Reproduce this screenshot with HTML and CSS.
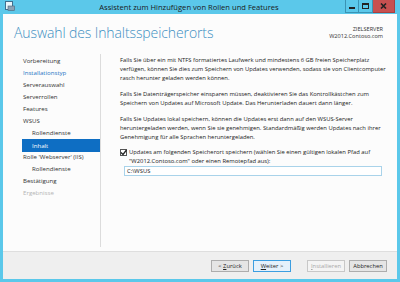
FILE: index.html
```html
<!DOCTYPE html>
<html lang="de">
<head>
<meta charset="utf-8">
<title>Assistent zum Hinzufügen von Rollen und Features</title>
<link rel="stylesheet" href="styles.css">
</head>
<body>
<div class="window">
  <div class="titlebar">
    <svg class="appicon" width="10" height="10" viewBox="0 0 10 10">
      <rect x="0.5" y="0.5" width="7" height="8" fill="#eaf6fb" stroke="#3f6f8f"/>
      <rect x="3" y="5" width="6.5" height="4.5" fill="#8aa2b5" stroke="#4d6478" stroke-width="0.6"/>
    </svg>
    <div class="title">Assistent zum Hinzufügen von Rollen und Features</div>
    <div class="controls">
      <div class="ctl"><span class="min"></span></div>
      <div class="ctl"><span class="max"></span></div>
      <div class="ctl close">
        <svg width="7" height="6" viewBox="0 0 7 6"><path d="M1 0.5 L6 5.5 M6 0.5 L1 5.5" stroke="#222" stroke-width="1.6"/></svg>
      </div>
    </div>
  </div>
  <div class="client">
    <div class="header">
      <h1>Auswahl des Inhaltsspeicherorts</h1>
      <div class="target">
        <div>ZIELSERVER</div>
        <div>W2012.Contoso.com</div>
      </div>
    </div>
    <div class="main">
      <ul class="nav">
        <li>Vorbereitung</li>
        <li class="link">Installationstyp</li>
        <li>Serverauswahl</li>
        <li>Serverrollen</li>
        <li>Features</li>
        <li>WSUS</li>
        <li class="sub">Rollendienste</li>
        <li class="sub active">Inhalt</li>
        <li>Rolle 'Webserver' (IIS)</li>
        <li class="sub">Rollendienste</li>
        <li>Bestätigung</li>
        <li class="disabled">Ergebnisse</li>
      </ul>
      <div class="divider"></div>
      <div class="content">
        <p>Falls Sie über ein mit NTFS formatiertes Laufwerk und mindestens 6 GB freien Speicherplatz verfügen, können Sie dies zum Speichern von Updates verwenden, sodass sie von Clientcomputer rasch herunter geladen werden können.</p>
        <p>Falls Sie Datenträgerspeicher einsparen müssen, deaktivieren Sie das Kontrollkästchen zum Speichern von Updates auf Microsoft Update. Das Herunterladen dauert dann länger.</p>
        <p>Falls Sie Updates lokal speichern, können die Updates erst dann auf den WSUS-Server heruntergeladen werden, wenn Sie sie genehmigen. Standardmäßig werden Updates nach ihrer Genehmigung für alle Sprachen heruntergeladen.</p>
        <div class="check">
          <span class="box"><svg width="7" height="7" viewBox="0 0 7 7"><path d="M1 3.5 L3 5.5 L6.5 1" fill="none" stroke="#222" stroke-width="1.3"/></svg></span>
          <span class="label">Updates am folgenden Speicherort speichern (wählen Sie einen gültigen lokalen Pfad auf "W2012.Contoso.com" oder einen Remotepfad aus):</span>
        </div>
        <div class="path">C:\WSUS</div>
      </div>
    </div>
    <div class="footer">
      <div class="btngroup">
        <div class="btn">&lt; <u>Z</u>urück</div>
        <div class="btn default"><u>W</u>eiter &gt;</div>
      </div>
      <div class="btngroup">
        <div class="btn disabled"><u>I</u>nstallieren</div>
        <div class="btn">Abbrechen</div>
      </div>
    </div>
  </div>
</div>
</body>
</html>
```

FILE: styles.css
```css
* { box-sizing: border-box; }
html, body { margin: 0; padding: 0; }
body {
  width: 400px;
  height: 282px;
  overflow: hidden;
  background: #5bc8ea;
  font-family: "Open Sans", "DejaVu Sans", sans-serif;
  color: #222;
}
.window {
  width: 400px;
  height: 282px;
  display: flex;
  flex-direction: column;
  padding: 0 3px 3px 3px;
  background: #5bc8ea;
}
.titlebar {
  height: 14px;
  display: flex;
  align-items: center;
}
.appicon { margin-left: 2px; margin-top: -2px; }
.title {
  flex: 1;
  text-align: center;
  font-size: 7.6px;
  color: #1a1a1a;
  padding-left: 18px;
}
.controls {
  display: flex;
  align-self: flex-start;
  margin-right: 2px;
}
.ctl {
  width: 14px;
  height: 13px;
  border: 1px solid #3a93b4;
  border-top: none;
  border-left: none;
  display: flex;
  align-items: center;
  justify-content: center;
}
.ctl:first-child { border-left: 1px solid #3a93b4; }
.ctl .min { width: 6px; height: 2px; background: #222; margin-top: 4px; }
.ctl .max { width: 7px; height: 6px; border: 1px solid #222; border-top-width: 2px; }
.ctl.close {
  width: 22px;
  background: #c75050;
  border-color: #a84040;
}
.client {
  flex: 1;
  background: #fcfcfc;
  display: flex;
  flex-direction: column;
}
.header {
  height: 40px;
  display: flex;
  justify-content: space-between;
  padding: 0 14px 0 11px;
}
h1 {
  margin: 9px 0 0 0;
  font-size: 14px;
  font-weight: 300;
  color: #3d8fc2;
  letter-spacing: -0.1px;
}
.target {
  margin-top: 12px;
  text-align: right;
  font-size: 5.6px;
  line-height: 7px;
  color: #333;
}
.main {
  flex: 1;
  display: flex;
  min-height: 0;
}
.nav {
  list-style: none;
  margin: 0;
  padding: 1px 0 0 19px;
  width: 97px;
  font-size: 6.1px;
  color: #333;
}
.nav li {
  height: 12px;
  line-height: 12px;
  padding-left: 1px;
  white-space: nowrap;
}
.nav li.sub { padding-left: 10px; }
.nav li.link { color: #1d73c4; }
.nav li.disabled { color: #b5b5b5; }
.nav li.active {
  background: #0e6ec3;
  color: #fff;
  height: 13px;
  line-height: 13px;
  margin-top: -0.5px;
  margin-bottom: -0.5px;
}
.divider {
  width: 1px;
  background: #dcdcdc;
  margin-bottom: 4px;
}
.content {
  flex: 1;
  padding: 2px 6px 0 19px;
  font-size: 5.85px;
  line-height: 9px;
  color: #222;
}
.content p {
  margin: 0 0 7px 0;
}
.check {
  display: flex;
  align-items: flex-start;
  margin-top: -1px;
}
.box {
  width: 7px;
  height: 7px;
  border: 1px solid #555;
  background: #fff;
  margin-top: 1px;
  margin-right: 2px;
  display: flex;
  flex-shrink: 0;
}
.box svg { margin: -1px; }
.label { flex: 1; }
.path {
  margin: 0 9px 0 4px;
  height: 10px;
  border: 1px solid #a9d3ea;
  background: #fff;
  padding-left: 2px;
  font-size: 5.85px;
  line-height: 8px;
}
.footer {
  height: 28px;
  background: #efefef;
  border-top: 1px solid #dedede;
  display: flex;
  justify-content: flex-end;
  align-items: center;
  gap: 16px;
  padding: 0 10px 0 0;
}
.btngroup {
  display: flex;
  gap: 4px;
}
.btn {
  width: 38px;
  height: 12px;
  border: 1px solid #adadad;
  background: #e5e5e5;
  font-size: 5.8px;
  line-height: 10px;
  text-align: center;
  color: #222;
}
.btn.default { border-color: #3c9ee0; background: #e5f1fb; }
.btn.disabled { color: #a8a8a8; border-color: #c8c8c8; background: #f4f4f4; }
.btn u { text-decoration: underline; }
```
